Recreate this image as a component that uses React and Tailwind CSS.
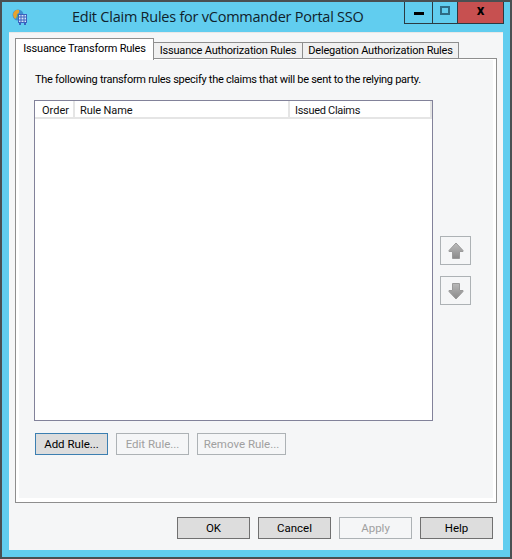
function Btn({ label, w, state = "normal" }) {
  const styles = {
    normal: "bg-[#dddddd] border-[#707070] text-black",
    focus: "bg-[#dddddd] border-[#3c7fb1] text-black",
    disabled: "bg-[#f5f6f7] border-[#adb2b5] text-[#a0a0a0]",
  };
  return (
    <button className={`h-[22px] pt-px border flex items-center justify-center text-[11.5px] leading-none ${w} ${styles[state]}`}>
      {label}
    </button>
  );
}

function ArrowBtn({ down }) {
  return (
    <div className="w-[31px] h-[29px] border border-[#adb2b5] flex items-center justify-center">
      <svg width="16" height="18" viewBox="0 0 16 18" className={down ? "rotate-180" : ""}>
        <defs>
          <linearGradient id={down ? "ad" : "au"} x1="0" y1="0" x2="0" y2="1">
            <stop offset="0" stopColor={down ? "#8a8a8a" : "#bdbdbd"} />
            <stop offset="1" stopColor={down ? "#b8b8b8" : "#8a8a8a"} />
          </linearGradient>
        </defs>
        <path d="M8 1 L15 8.5 V9.5 H11.5 V16.5 H4.5 V9.5 H1 V8.5 Z" fill={`url(#${down ? "ad" : "au"})`} stroke="#9a9a9a" strokeWidth="1" />
      </svg>
    </div>
  );
}

function Ctrl({ w, className, children }) {
  return <div className={`h-[23px] flex items-center justify-center border border-t-0 border-[#2b3a42] ${w} ${className}`}>{children}</div>;
}

const tabText = "text-[11px] tracking-[-0.2px] text-black whitespace-nowrap";

export default function App() {
  return (
    <div className="w-[512px] h-[559px] bg-[#61cdef] border-2 border-[#4a4f52] flex flex-col overflow-hidden font-['Roboto',sans-serif]">
      <div className="h-[30px] flex shrink-0">
        <div className="pl-[9px] pt-[7px] w-[40px] shrink-0">
          <svg width="17" height="17" viewBox="0 0 17 17">
            <circle cx="7" cy="6" r="5.5" fill="#3f8fd0" />
            <path d="M2 5 Q4 0 8 1 Q9 4 6 5 Q6 9 4 10 Q2 8 2 5Z" fill="#e8a32c" />
            <path d="M6 6 Q9 4 11 7 Q9 11 7 11 Z" fill="#58b04a" />
            <rect x="7.5" y="5.5" width="8" height="8" fill="#d7e6f7" stroke="#3a62c0" />
            <path d="M10 6 V13 M13 6 V13 M8 8 H15 M8 11 H15" stroke="#3a62c0" strokeWidth="1" />
            <rect x="8" y="14" width="2" height="2" fill="#3a62c0" />
            <rect x="13" y="14" width="2" height="2" fill="#3a62c0" />
          </svg>
        </div>
        <div className="w-[362px] shrink-0 pl-[30px] pt-[4px] text-[14.5px] tracking-[-0.24px] leading-[22px] text-[#10222c] whitespace-nowrap font-['Open_Sans',sans-serif]">
          Edit Claim Rules for vCommander Portal SSO
        </div>
        <div className="flex h-[21px] -mt-px">
          <Ctrl w="w-[29px]"><div className="w-[10px] h-[3px] bg-black mt-[3px]" /></Ctrl>
          <Ctrl w="w-[26px] -ml-px"><div className="w-[10px] h-[9px] border-2 border-[#2e6b85] bg-[#61cdef] -mt-[3px]" /></Ctrl>
          <Ctrl w="w-[47px] -ml-px" className="bg-[#c75050]">
            <span className="text-[15px] font-bold text-black leading-none -mt-1">x</span>
          </Ctrl>
        </div>
      </div>

      <div className="ml-[7px] w-[494px] h-[518px] bg-[#f5f6f7] border-t border-[#e8e8e8] flex flex-col">
        <div className="flex items-end pl-[6px] pt-[5px] h-[26px] relative z-10">
          <div className={`h-[22px] w-[139px] bg-white border border-b-0 border-[#8e8e8e] flex items-center justify-center -mb-px ${tabText}`}>
            Issuance Transform Rules
          </div>
          <div className={`h-[17px] w-[149px] pt-px bg-[#f0f0f0] border border-l-0 border-[#8e8e8e] flex items-center justify-center ${tabText}`}>
            Issuance Authorization Rules
          </div>
          <div className={`h-[17px] w-[156px] pt-px bg-[#f0f0f0] border border-l-0 border-[#8e8e8e] flex items-center justify-center ${tabText}`}>
            Delegation Authorization Rules
          </div>
        </div>

        <div className="mx-[6px] w-[482px] h-[445px] border border-[#8e8e8e] bg-white pt-[1px] px-[3px] pb-[4px] -mt-px">
          <div className="h-full bg-[#f5f6f7] flex">
            <div className="pl-[15px] w-[414px] shrink-0 flex flex-col">
              <p className="pt-[13px] pl-px text-[11px] tracking-[-0.28px] leading-[14px] text-black whitespace-nowrap">
                The following transform rules specify the claims that will be sent to the relying party.
              </p>
              <div className="mt-[13px] w-[399px] h-[321px] border border-[#82829a] bg-white">
                <div className="h-[18px] flex border-b-2 border-[#e5e5e5] ml-0 text-[11px] text-[#111] leading-[20px]">
                  <div className="w-[40px] pl-[7px] border-r-2 border-[#e5e5e5]">Order</div>
                  <div className="w-[215px] pl-[5px] tracking-[-0.1px] border-r-2 border-[#e5e5e5]">Rule Name</div>
                  <div className="w-[142px] pl-[5px] tracking-[-0.3px] border-r-2 border-[#e5e5e5]">Issued Claims</div>
                </div>
              </div>
              <div className="mt-[12px] ml-px flex gap-[8px]">
                <Btn label="Add Rule..." w="w-[73px]" state="focus" />
                <Btn label="Edit Rule..." w="w-[73px]" state="disabled" />
                <Btn label="Remove Rule..." w="w-[89px]" state="disabled" />
              </div>
            </div>
            <div className="pl-[7px] pt-[176px] flex flex-col gap-[11px]">
              <ArrowBtn />
              <ArrowBtn down />
            </div>
          </div>
        </div>

        <div className="mt-[14px] ml-[168px] flex gap-[8px]">
          <Btn label="OK" w="w-[73px]" />
          <Btn label="Cancel" w="w-[73px]" />
          <Btn label="Apply" w="w-[73px]" state="disabled" />
          <Btn label="Help" w="w-[73px]" />
        </div>
      </div>
    </div>
  );
}
